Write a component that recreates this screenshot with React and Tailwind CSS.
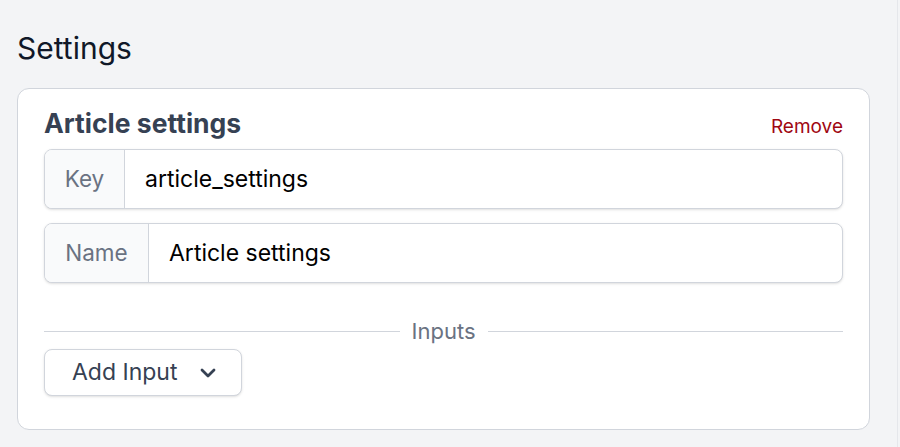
import React from 'react';

const Field = ({ label, value, labelWidth }) => (
  <div className="flex h-[60px] rounded-lg border border-gray-300 bg-white shadow-sm overflow-hidden">
    <div className={`${labelWidth} flex items-center justify-center bg-gray-50 border-r border-gray-300 text-gray-500 text-[22.5px]`}>
      {label}
    </div>
    <div className="flex-1 flex items-center px-5 text-[23px] text-black">{value}</div>
  </div>
);

const App = () => {
  return (
    <div className="min-h-screen bg-gray-100 flex" style={{ fontFamily: 'Inter, "Noto Sans", sans-serif' }}>
      <div className="flex-1 pl-[17px] pr-[27px] pt-[30px]">
        <h1 className="text-[30px] leading-[36px] text-gray-900">Settings</h1>
        <div className="mt-[22px] rounded-xl border border-gray-300 bg-white px-[26px] pt-[16px] pb-[33px]">
          <div className="flex items-end justify-between h-[36px] mb-[8px]">
            <h2 className="text-[26.5px] leading-[36px] font-bold text-gray-700">Article settings</h2>
            <button className="text-[19px] leading-[28px] text-red-800">Remove</button>
          </div>
          <div className="flex flex-col gap-[14px]">
            <Field label="Key" value="article_settings" labelWidth="w-[80px]" />
            <Field label="Name" value="Article settings" labelWidth="w-[104px]" />
          </div>
          <div className="flex items-center gap-3 mt-[32px] h-[32px]">
            <div className="flex-1 h-px bg-gray-300" />
            <span className="text-[22px] text-gray-500">Inputs</span>
            <div className="flex-1 h-px bg-gray-300" />
          </div>
          <button className="mt-[2px] h-[47px] w-[198px] rounded-lg border border-gray-300 bg-white shadow-sm flex items-center gap-[23px] pl-[27px] text-[23px] text-gray-700">
            Add Input
            <svg width="16" height="10" viewBox="0 0 16 10" fill="none" stroke="currentColor" strokeWidth="2.8" strokeLinecap="round" strokeLinejoin="round">
              <polyline points="2,2 8,8 14,2" />
            </svg>
          </button>
        </div>
      </div>
      <div className="w-[3px] border-l border-gray-200 bg-gray-100" />
    </div>
  );
};

export default App;
